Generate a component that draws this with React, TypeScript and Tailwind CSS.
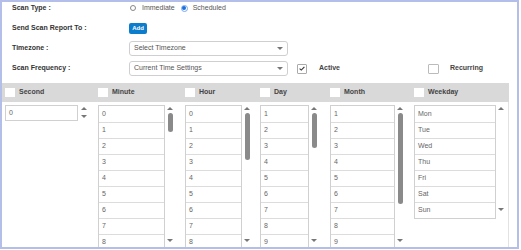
const font = "font-['Liberation_Sans',Arial,sans-serif]";

const range = (a: number, b: number) => Array.from({ length: b - a + 1 }, (_, i) => String(a + i));

const columns = [
  { label: 'Second', w: 'w-[93px]', listW: 'w-[73px]', items: ['0'], spin: true },
  { label: 'Minute', w: 'w-[87px]', listW: 'w-[67px]', items: range(0, 8), thumb: 'h-[19px]', track: 'h-[138px]' },
  { label: 'Hour', w: 'w-[75px]', listW: 'w-[57px]', items: range(0, 8), thumb: 'h-[47px]', track: 'h-[138px]' },
  { label: 'Day', w: 'w-[70px]', listW: 'w-[49px]', items: range(1, 9), thumb: 'h-[35px]', track: 'h-[138px]' },
  { label: 'Month', w: 'w-[84px]', listW: 'w-[65px]', items: range(1, 9), thumb: 'h-[91px]', track: 'h-[138px]' },
  {
    label: 'Weekday',
    w: 'w-[94px]',
    listW: 'w-[82px]',
    items: ['Mon', 'Tue', 'Wed', 'Thu', 'Fri', 'Sat', 'Sun'],
    track: 'h-[107px]',
  },
];

const Up = () => (
  <span className="block w-0 h-0 border-l-[3px] border-r-[3px] border-b-[3px] border-l-transparent border-r-transparent border-b-[#777]" />
);
const Down = () => (
  <span className="block w-0 h-0 border-l-[3px] border-r-[3px] border-t-[3px] border-l-transparent border-r-transparent border-t-[#777]" />
);

const Select = ({ text }: { text: string }) => (
  <div className="w-[159px] h-[15px] border border-[#cfcfcf] rounded-[3px] flex items-center justify-between pl-[4px] pr-[4px] text-[7px] text-[#555]">
    <span>{text}</span>
    <Down />
  </div>
);

const Label = ({ children }: { children: string }) => (
  <span className="w-[117px] shrink-0 text-[7px] font-bold text-[#333]">{children}</span>
);

export default function App() {
  return (
    <div className={`${font} w-[519px] h-[249px] border-2 border-[#b3bfe8] bg-white overflow-hidden`}>
      <div className="pl-[10px]">
        <div className="h-[12px] flex items-center">
          <Label>Scan Type :</Label>
          <div className="flex items-center text-[7px] text-[#555]">
            <span className="ml-[1px] w-[6px] h-[6px] rounded-full border border-[#888] bg-white" />
            <span className="ml-[6px]">Immediate</span>
            <span className="ml-[6px] w-[7px] h-[7px] rounded-full border border-[#7aa7ea] bg-white flex items-center justify-center">
              <span className="w-[4px] h-[4px] rounded-full bg-[#1a6fe0]" />
            </span>
            <span className="ml-[5px]">Scheduled</span>
          </div>
        </div>
        <div className="mt-[8px] h-[12px] flex items-center">
          <Label>Send Scan Report To :</Label>
          <button className="w-[18px] h-[11px] rounded-[2px] bg-[#0b7dcc] text-white text-[6px] font-bold leading-none">
            Add
          </button>
        </div>
        <div className="mt-[7px] h-[15px] flex items-center">
          <Label>Timezone :</Label>
          <Select text="Select Timezone" />
        </div>
        <div className="mt-[5px] h-[15px] flex items-center">
          <Label>Scan Frequency :</Label>
          <Select text="Current Time Settings" />
          <div className="ml-[9px] w-[131px] flex items-center">
            <span className="w-[10px] h-[10px] border border-[#aaa] rounded-[1px] bg-white flex items-center justify-center">
              <svg width="6" height="5" viewBox="0 0 6 5">
                <path d="M0.6 2.6 L2.3 4.1 L5.4 0.8" fill="none" stroke="#333" strokeWidth="1.1" />
              </svg>
            </span>
            <span className="ml-[12px] text-[7px] font-bold text-[#444]">Active</span>
          </div>
          <div className="flex items-center">
            <span className="w-[11px] h-[10px] border border-[#bbb] rounded-[1px] bg-white" />
            <span className="ml-[11px] text-[7px] font-bold text-[#444]">Recurring</span>
          </div>
        </div>
      </div>

      <div className="mt-[7px] w-[507px]">
        <div className="h-[19px] bg-[#d9d9d9] flex items-center pl-[3px]">
          {columns.map((c) => (
            <div key={c.label} className={`${c.w} flex items-center`}>
              <span className="w-[10px] h-[9px] bg-white" />
              <span className="ml-[4px] text-[7px] font-bold text-[#444]">{c.label}</span>
            </div>
          ))}
        </div>
        <div className="h-[160px] border-r border-[#e2e2e2] flex pl-[3px] pt-[3px]">
          {columns.map((c) => (
            <div key={c.label} className={`${c.w} flex items-start`}>
              {c.spin ? (
                <>
                  <div className={`${c.listW} h-[16px] border border-[#d0d0d0] flex items-center pl-[3px] text-[7px] text-[#666]`}>
                    0
                  </div>
                  <div className="ml-[3px] pt-[2px] flex flex-col items-center gap-[5px]">
                    <Up />
                    <Down />
                  </div>
                </>
              ) : (
                <>
                  <div className={`${c.listW} border border-[#d0d0d0]`}>
                    {c.items.map((it, i) => (
                      <div
                        key={it}
                        className={`h-[16px] flex items-center pl-[3px] text-[7px] text-[#666] ${
                          i > 0 ? 'border-t border-[#dcdcdc]' : ''
                        }`}
                      >
                        {it}
                      </div>
                    ))}
                  </div>
                  <div className={`ml-[2px] w-[6px] ${c.track} pt-[2px] pb-[1px] flex flex-col items-center`}>
                    <Up />
                    {c.thumb && <span className={`mt-[3px] w-[5px] ${c.thumb} rounded-full bg-[#8a8a8a]`} />}
                    <span className="flex-1" />
                    <Down />
                  </div>
                </>
              )}
            </div>
          ))}
        </div>
      </div>
    </div>
  );
}
